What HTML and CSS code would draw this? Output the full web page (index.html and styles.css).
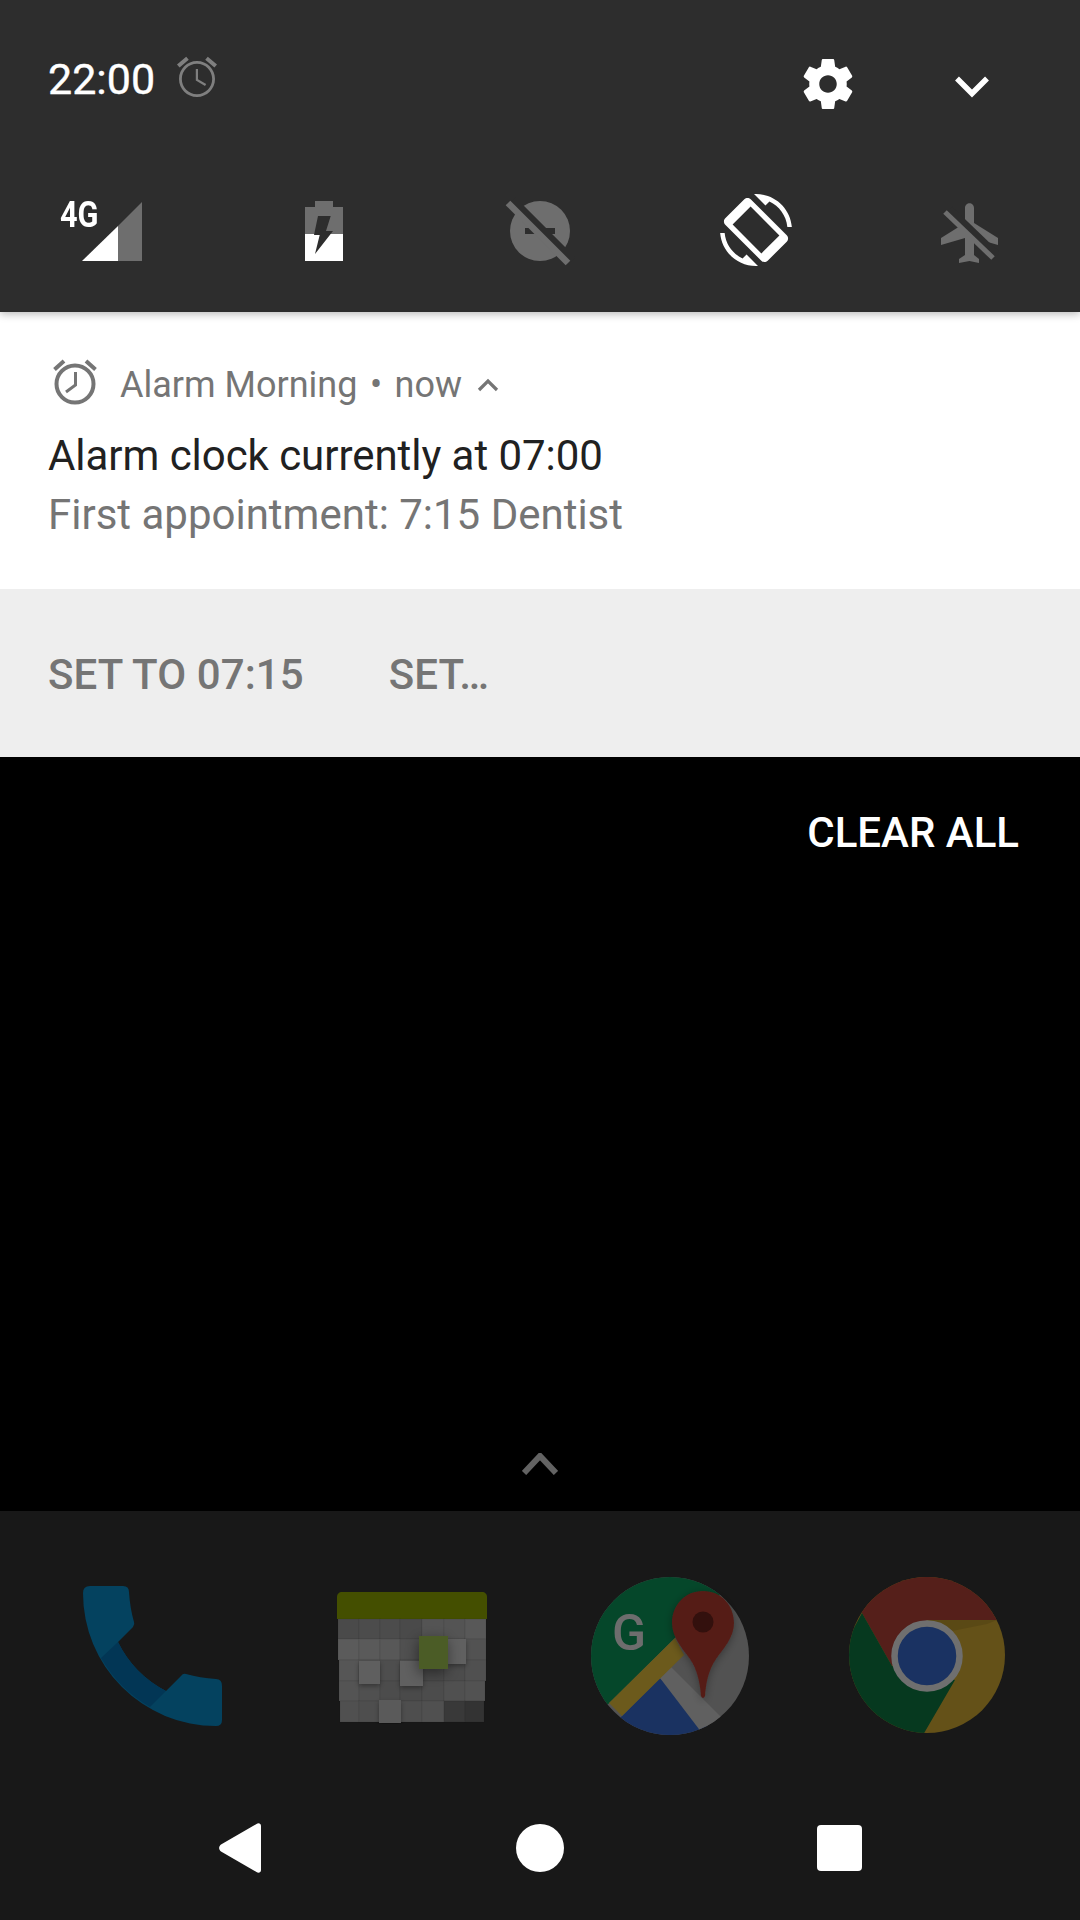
FILE: index.html
```html
<!DOCTYPE html>
<html lang="en">
<head>
<meta charset="utf-8">
<title>Notification shade</title>
<link rel="stylesheet" href="styles.css">
</head>
<body>
<div class="screen">
  <header class="shade">
    <div class="status-row">
      <span class="time">22:00</span>
      <svg class="ic-alarm-small" viewBox="0 0 24 24"><path fill="#7f7f7f" d="M22 5.72l-4.6-3.86-1.29 1.53 4.6 3.86L22 5.72zM7.88 3.39L6.6 1.86 2 5.71l1.29 1.53 4.59-3.85zM12.5 8H11.4v5.8l4.6 2.75.6-1-4.1-2.4V8zM12 4c-4.97 0-9 4.03-9 9s4.02 9 9 9c4.97 0 9-4.03 9-9s-4.03-9-9-9zm0 16.600c-4.2 0-7.6-3.4-7.6-7.6s3.4-7.6 7.6-7.6 7.6 3.4 7.6 7.6-3.4 7.6-7.6 7.6z"/></svg>
      <svg class="ic-gear" viewBox="0 0 24 24"><path fill="#fff" d="M19.43 12.98c.04-.32.07-.64.07-.98s-.03-.66-.07-.98l2.11-1.65c.19-.15.24-.42.12-.64l-2-3.46c-.12-.22-.39-.3-.61-.22l-2.49 1c-.52-.4-1.08-.73-1.69-.98l-.38-2.65C14.46 2.18 14.25 2 14 2h-4c-.25 0-.46.18-.49.42l-.38 2.65c-.61.25-1.17.59-1.69.98l-2.49-1c-.23-.09-.49 0-.61.22l-2 3.46c-.13.22-.07.49.12.64l2.11 1.65c-.04.32-.07.65-.07.98s.03.66.07.98l-2.11 1.65c-.19.15-.24.42-.12.64l2 3.46c.12.22.39.3.61.22l2.49-1c.52.4 1.08.73 1.69.98l.38 2.65c.03.24.24.42.49.42h4c.25 0 .46-.18.49-.42l.38-2.65c.61-.25 1.17-.59 1.69-.98l2.49 1c.23.09.49 0 .61-.22l2-3.46c.12-.22.07-.49-.12-.64l-2.11-1.65zM12 15.5c-1.93 0-3.5-1.57-3.5-3.5s1.57-3.5 3.5-3.5 3.5 1.57 3.5 3.5-1.57 3.5-3.5 3.5z"/></svg>
      <svg class="ic-chevron" viewBox="0 0 36 24"><path fill="none" stroke="#fff" stroke-width="5.5" d="M3 3.5l15 15 15-15"/></svg>
    </div>
    <div class="tiles">
      <div class="tile-signal">
        <span class="net">4G</span>
        <svg class="ic-signal" viewBox="0 0 60 60"><path fill="#6e6e6e" d="M60 0v59H36V24z"/><path fill="#fff" d="M0 59l36-35v35z"/></svg>
      </div>
      <svg class="ic-battery" viewBox="0 0 38 60"><path fill="#6e6e6e" d="M10 0h18v6h10v27H0V6h10z"/><path fill="#fff" d="M0 33h38v27H0z"/><path fill="#2d2d2d" d="M13 15h12.700L21 30h7L10 53l4.700-19H9z"/></svg>
      <svg class="ic-dnd" viewBox="0 0 70 70"><circle cx="35" cy="35" r="30" fill="#6e6e6e"/><path fill="#2d2d2d" d="M20 32h30v6H20z"/><path stroke="#2d2d2d" stroke-width="10" d="M7 5l60 60"/><path stroke="#6e6e6e" stroke-width="6.500" d="M3 7l60 60"/></svg>
      <svg class="ic-rotate" viewBox="0 0 24 24"><path fill="#fff" fill-rule="evenodd" d="M16.48 2.52c3.27 1.55 5.61 4.72 5.97 8.48h1.5C23.44 4.84 18.29 0 12 0l-.66.03 3.81 3.81 1.33-1.32zM10.230 1.750c-.59-.59-1.54-.59-2.120 0L1.750 8.110c-.59.59-.59 1.540 0 2.120l12.020 12.020c.59.59 1.540.59 2.120 0l6.360-6.360c.59-.59.59-1.540 0-2.120L10.230 1.750zM10.200 4.200l9.600 9.600-6 6-9.600-9.600zM7.520 21.480C4.250 19.940 1.910 16.760 1.550 13H.05C.56 19.160 5.710 24 12 24l.66-.03-3.810-3.810-1.330 1.320z"/></svg>
      <svg class="ic-plane" viewBox="0 0 58 64"><path fill="#6e6e6e" d="M24 5c0-6.500 9-6.500 9 0v15l24 15v7l-24-7v17l5 4v4l-9.500-2-10.500 2v-4l6-4V35L0 42v-7l24-15z"/><path stroke="#2d2d2d" stroke-width="9" d="M8 7l48 46"/><path stroke="#6e6e6e" stroke-width="5" d="M4 9l48 46"/></svg>
    </div>
  </header>
  <section class="notification">
    <div class="note-body">
      <div class="note-head">
        <svg class="ic-alarm-note" viewBox="0 0 44 46"><path fill="none" stroke="#757575" stroke-width="4" d="M1.500 10.500L11 2M42.500 10.500L33 2"/><circle cx="22" cy="25" r="18.500" fill="none" stroke="#757575" stroke-width="4"/><path fill="none" stroke="#757575" stroke-width="3" d="M22.500 13v13L13 33"/></svg>
        <span class="app">Alarm Morning</span>
        <span class="dot">•</span>
        <span class="app">now</span>
        <svg class="ic-caret" viewBox="0 0 22 14"><path fill="none" stroke="#757575" stroke-width="3.200" d="M2 12l9-9 9 9"/></svg>
      </div>
      <div class="note-title">Alarm clock currently at 07:00</div>
      <div class="note-text">First appointment: 7:15 Dentist</div>
    </div>
    <div class="note-actions">
      <span class="action">SET TO 07:15</span>
      <span class="action">SET…</span>
    </div>
  </section>
  <main class="empty">
    <div class="clear-row"><span class="clear">CLEAR ALL</span></div>
    <svg class="ic-up" viewBox="0 0 36 22"><path fill="none" stroke="#636363" stroke-width="6" d="M2 20L18 3l16 17"/></svg>
  </main>
  <footer class="launcher">
    <div class="dock">
      <svg class="app-phone" viewBox="0 0 140 140">
        <path fill="#04425f" d="M7 0H40Q46 0 46 6Q47 22 51 36Q52 38 50 41L35 56A110 110 0 0 0 83 105L98 90Q100 87 103 88Q117 92 133 93Q139 93 139 100V134Q139 140 133 140A133 133 0 0 1 0 7Q0 0 7 0Z"/>
        <path fill="#023655" d="M35 56A110 110 0 0 0 83 105L67 121A133 133 0 0 1 18 72Z"/>
      </svg>
      <svg class="app-calendar" viewBox="0 0 150 132">
        <defs>
          <filter id="cs" x="-40%" y="-40%" width="180%" height="180%"><feDropShadow dx="0" dy="2" stdDeviation="2.500" flood-color="#000" flood-opacity=".35"/></filter>
          <filter id="gs" x="-60%" y="-60%" width="220%" height="220%"><feDropShadow dx="-1" dy="4" stdDeviation="7" flood-color="#000" flood-opacity=".45"/></filter>
        </defs>
        <path fill="#444f00" d="M0 5c0-3 2-5 5-5h140c3 0 5 2 5 5v22H0z"/>
        <g class="cal-tiles">
          <rect x="1" y="27" width="21" height="20" fill="#4a4a4a"/><rect x="22" y="27" width="21" height="20" fill="#4c4c4c"/><rect x="43" y="27" width="20" height="20" fill="#4c4c4c"/><rect x="63" y="27" width="22" height="20" fill="#4a4a4a"/><rect x="85" y="27" width="22" height="20" fill="#545454"/><rect x="107" y="27" width="21" height="20" fill="#545454"/><rect x="128" y="27" width="21" height="20" fill="#585858"/>
          <rect x="1" y="47" width="21" height="21" fill="#5b5b5b"/><rect x="22" y="47" width="21" height="21" fill="#5a5a5a"/><rect x="43" y="47" width="20" height="21" fill="#585858"/><rect x="63" y="47" width="22" height="21" fill="#505050"/><rect x="85" y="47" width="22" height="21" fill="#464646"/><rect x="107" y="47" width="21" height="21" fill="#4e4e4e"/><rect x="128" y="47" width="21" height="21" fill="#525252"/>
          <rect x="2" y="68" width="20" height="21" fill="#565656"/><rect x="22" y="68" width="21" height="21" fill="#545454"/><rect x="43" y="68" width="20" height="21" fill="#4e4e4e"/><rect x="63" y="68" width="22" height="21" fill="#525252"/><rect x="85" y="68" width="22" height="21" fill="#4a4a4a"/><rect x="107" y="68" width="21" height="21" fill="#4c4c4c"/><rect x="128" y="68" width="21" height="21" fill="#505050"/>
          <rect x="2" y="89" width="20" height="20" fill="#545454"/><rect x="22" y="89" width="21" height="20" fill="#505050"/><rect x="43" y="89" width="20" height="20" fill="#4c4c4c"/><rect x="63" y="89" width="22" height="20" fill="#4a4a4a"/><rect x="85" y="89" width="22" height="20" fill="#4c4c4c"/><rect x="107" y="89" width="21" height="20" fill="#505050"/><rect x="128" y="89" width="20" height="20" fill="#525252"/>
          <rect x="3" y="109" width="19" height="21" fill="#505050"/><rect x="22" y="109" width="21" height="21" fill="#4e4e4e"/><rect x="63" y="109" width="22" height="21" fill="#4e4e4e"/><rect x="85" y="109" width="22" height="21" fill="#505050"/><rect x="107" y="109" width="21" height="21" fill="#393939"/><rect x="128" y="109" width="19" height="21" fill="#333"/>
        </g>
        <g filter="url(#cs)">
          <rect x="42" y="108" width="22" height="23" fill="#5a5a5a"/>
          <rect x="22" y="69" width="21" height="23" fill="#5e5e5e"/>
          <rect x="63" y="69" width="23" height="25" fill="#606060"/>
        </g>
        <rect x="111" y="47" width="18" height="25" fill="#606060" filter="url(#cs)"/>
        <rect x="82" y="44" width="29" height="33" fill="#4c5c26" filter="url(#gs)"/>
      </svg>
      <svg class="app-maps" viewBox="0 0 158 158">
        <defs>
          <clipPath id="mc"><circle cx="79" cy="79" r="79"/></clipPath>
          <filter id="ps" x="-30%" y="-20%" width="160%" height="140%"><feDropShadow dx="0" dy="2" stdDeviation="4" flood-color="#000" flood-opacity=".35"/></filter>
        </defs>
        <g clip-path="url(#mc)">
          <rect width="158" height="158" fill="#525252"/>
          <path fill="#05472a" d="M0 0h140L129 18 84 61 0 144z"/>
          <path fill="#1a3261" d="M69 101L20 150v10h110l-16-13z"/>
          <path fill="#606060" d="M69 101l10-12 56 56-21 15z"/>
          <path fill="#6c5a1c" d="M18 126L84 61l9 17-62 61z"/>
        </g>
        <path fill="#551d17" filter="url(#ps)" d="M112 14C93 14 81 29 81 46C81 60 91 71 99 82C106 92 109 105 110 119Q112 123 114 119C115 105 118 92 125 82C133 71 143 60 143 46C143 29 131 14 112 14Z"/>
        <circle cx="112" cy="45" r="10.500" fill="#33100d"/>
        <text class="maps-g" x="38" y="73" text-anchor="middle">G</text>
      </svg>
      <svg class="app-chrome" viewBox="0 0 156 156">
        <defs><clipPath id="cc"><circle cx="78" cy="78" r="78"/></clipPath></defs>
        <g clip-path="url(#cc)">
          <rect width="156" height="156" fill="#645118"/>
          <path fill="#551f1a" d="M13 36L43 89 78 43h78V0H13z"/>
          <path fill="#06391f" d="M13 36L0 60v98h74l32-55-63-14z"/>
          <path fill="#5a4915" d="M78 43h70l-10 4-40 8z"/>
        </g>
        <circle cx="78" cy="79" r="32.500" fill="#1a3262" stroke="#6f6f6f" stroke-width="6.500"/>
      </svg>
    </div>
    <nav class="nav-bar">
      <svg class="nav-back" viewBox="0 0 42 50"><path fill="#fff" d="M42 3c0-2.500-2.500-3.500-4.500-2L2 21.500c-2.500 2-2.500 5 0 7L37.500 49c2 1.500 4.500.5 4.500-2z"/></svg>
      <span class="nav-home"></span>
      <span class="nav-recent"></span>
    </nav>
  </footer>
</div>
</body>
</html>
```

FILE: styles.css
```css
* { box-sizing: border-box; }
html, body { margin: 0; padding: 0; }
body { width: 1080px; height: 1920px; overflow: hidden; font-family: Roboto, "Liberation Sans", sans-serif; background: #000; }
svg { display: block; flex: none; }
.screen { width: 1080px; height: 1920px; display: flex; flex-direction: column; }

.shade { position: relative; z-index: 1; height: 312px; background: #2d2d2d; padding-top: 53px; box-shadow: 0 2px 8px rgba(0,0,0,.28); }
.status-row { display: flex; align-items: flex-start; height: 60px; padding-left: 48px; }
.time { width: 107px; font-size: 43px; line-height: 50px; color: #fff; margin-top: 1px; white-space: nowrap; -webkit-text-stroke: .4px #fff; }
.ic-alarm-small { width: 48px; height: 48px; margin-left: 18px; }
.ic-gear { width: 60px; height: 60px; margin-left: 576.500px; margin-top: 1px; }
.ic-chevron { width: 36px; height: 24px; margin-left: 96.500px; margin-top: 21.500px; }

.tiles { display: flex; align-items: flex-start; margin-top: 88px; padding-left: 61px; }
.tile-signal { position: relative; width: 81px; height: 60px; }
.net { position: absolute; left: -1px; top: -7px; font-size: 37px; line-height: 42px; font-weight: 700; color: #fff; transform: scaleX(.83); transform-origin: 0 50%; }
.ic-signal { position: absolute; left: 21px; top: 1px; width: 60px; height: 60px; }
.ic-battery { width: 38px; height: 60px; margin-left: 163px; }
.ic-dnd { width: 70px; height: 70px; margin-left: 162px; margin-top: -5px; }
.ic-rotate { width: 72px; height: 72px; margin-left: 145px; margin-top: -7px; }
.ic-plane { width: 58px; height: 64px; margin-left: 149px; margin-top: 2px; }

.notification { height: 445px; display: flex; flex-direction: column; }
.note-body { height: 277px; background: #fff; padding: 47px 0 0 48px; }
.note-head { display: flex; align-items: center; height: 46px; color: #757575; font-size: 36px; }
.ic-alarm-note { width: 44px; height: 46px; margin-left: 5px; margin-right: 23px; }
.app { padding-top: 5px; }
.dot { margin: 0 12.500px; font-size: 36px; padding-top: 5px; }
.ic-caret { width: 22px; height: 14px; margin-left: 15px; margin-top: 5px; }
.note-title { font-size: 42px; line-height: 50px; color: #212121; margin-top: 26px; letter-spacing: -.05px; }
.note-text { font-size: 42px; line-height: 50px; color: #757575; margin-top: 9px; }
.note-actions { height: 168px; background: #eeeeee; display: flex; align-items: center; gap: 85px; padding-left: 48px; padding-top: 2px; }
.action { font-size: 42px; font-weight: 500; color: #757575; }
.action:first-child { letter-spacing: .1px; }

.empty { position: relative; height: 754px; background: #000; display: flex; flex-direction: column; align-items: center; }
.clear-row { align-self: stretch; display: flex; justify-content: flex-end; padding: 51px 61px 0 0; }
.clear { font-size: 42px; line-height: 50px; font-weight: 500; color: #fff; }
.ic-up { width: 36px; height: 22px; margin-top: 595px; }

.launcher { flex: 1; background: #181818; display: flex; flex-direction: column; }
.dock { height: 277px; padding-top: 66px; display: flex; align-items: flex-start; padding-left: 83px; }
.app-phone { width: 140px; height: 140px; margin-top: 9px; }
.app-calendar { width: 150px; height: 132px; margin-left: 114px; margin-top: 15px; }
.cal-tiles rect { stroke: rgba(0,0,0,.07); stroke-width: 1px; }
.app-maps { width: 158px; height: 158px; margin-left: 104px; }
.maps-g { font-family: Roboto, sans-serif; font-size: 50px; font-weight: 500; fill: #6d6d6d; }
.app-chrome { width: 156px; height: 156px; margin-left: 100px; }
.nav-bar { flex: 1; display: flex; align-items: flex-start; padding-top: 35px; }
.nav-back { width: 42px; height: 50px; margin-left: 219px; }
.nav-home { width: 48px; height: 48px; border-radius: 50%; background: #fff; margin-left: 255px; margin-top: 1px; }
.nav-recent { width: 45px; height: 46px; border-radius: 4px; background: #fff; margin-left: 253px; margin-top: 2px; }
```
